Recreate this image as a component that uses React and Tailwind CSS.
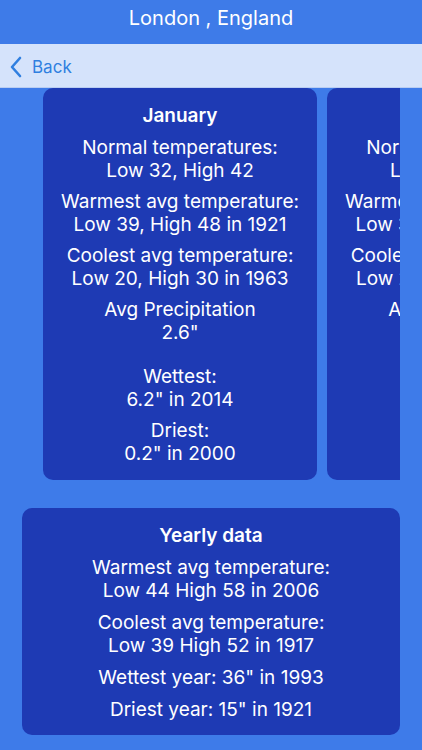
import React from 'react';

const months = [
  {
    name: 'January',
    normal: 'Low 32, High 42',
    warmest: 'Low 39, High 48 in 1921',
    coolest: 'Low 20, High 30 in 1963',
    precip: '2.6"',
    wettest: '6.2" in 2014',
    driest: '0.2" in 2000',
  },
  {
    name: 'February',
    normal: 'Low 33, High 44',
    warmest: 'Low 38, High 49 in 1998',
    coolest: 'Low 25, High 34 in 1947',
    precip: '1.9"',
    wettest: '4.3" in 2014',
    driest: '0.2" in 1959',
  },
];

const Pair = ({ label, value, className = '' }) => (
  <div className={className}>
    <div>{label}</div>
    <div>{value}</div>
  </div>
);

const MonthCard = ({ m }) => (
  <div className="w-[274px] shrink-0 rounded-[10px] bg-[#1e3ab4] pt-[16px] pb-[15px] text-center text-white">
    <div className="font-semibold">{m.name}</div>
    <div className="mt-[9px] flex flex-col gap-[8px]">
      <Pair label="Normal temperatures:" value={m.normal} />
      <Pair label="Warmest avg temperature:" value={m.warmest} />
      <Pair label="Coolest avg temperature:" value={m.coolest} />
      <Pair label="Avg Precipitation" value={m.precip} />
      <Pair label="Wettest:" value={m.wettest} className="mt-[13px]" />
      <Pair label="Driest:" value={m.driest} />
    </div>
  </div>
);

export default function App() {
  return (
    <div
      className="min-h-[750px] w-[422px] bg-[#3e7be9] text-[19px] leading-[23px]"
      style={{ fontFamily: 'Inter, "Noto Sans", sans-serif' }}
    >
      <div className="flex h-[44px] items-center justify-center bg-[#3e7be8] pb-[8px] text-[20px] text-white">
        London , England
      </div>
      <div className="flex h-[44px] items-center border-b border-[#b9cdf2] bg-[#d5e3fb] pl-[9px] pt-[3px] text-[17px] text-[#2f7fe0]">
        <svg width="14" height="22" viewBox="0 0 14 22" fill="none">
          <path d="M11 2 L3 11 L11 20" stroke="#2f7fe0" strokeWidth="2.6" strokeLinecap="round" strokeLinejoin="round" />
        </svg>
        <span className="ml-[9px]">Back</span>
      </div>

      <div className="mx-[22px] overflow-hidden">
        <div className="flex gap-[10px] pl-[21px]">
          {months.map((m) => (
            <MonthCard key={m.name} m={m} />
          ))}
        </div>
      </div>

      <div className="mx-[22px] mt-[28px] rounded-[10px] bg-[#1e3ab4] pt-[16px] pb-[14px] text-center text-white">
        <div className="font-semibold">Yearly data</div>
        <div className="mt-[9px] flex flex-col gap-[9px]">
          <Pair label="Warmest avg temperature:" value="Low 44 High 58 in 2006" />
          <Pair label="Coolest avg temperature:" value="Low 39 High 52 in 1917" />
          <div>Wettest year: 36" in 1993</div>
          <div>Driest year: 15" in 1921</div>
        </div>
      </div>
    </div>
  );
}
